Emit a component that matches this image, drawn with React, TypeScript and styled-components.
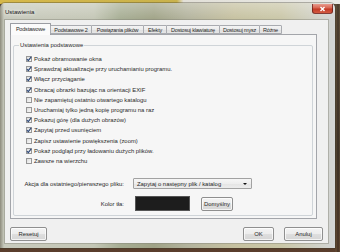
import React from 'react';
import styled, { createGlobalStyle } from 'styled-components';

const Global = createGlobalStyle`
  html, body { margin: 0; padding: 0; }
  body {
    width: 340px; height: 252px; overflow: hidden;
    font-family: "Liberation Sans", Arial, sans-serif;
    color: #2a2a2a;
  }
`;

const FS = '5.9px';

const Desktop = styled.div`
  width: 340px; height: 252px; box-sizing: border-box;
  padding: 3px 5px 4px 0;
  display: flex;
  background:
    linear-gradient(to right, #d6b84a 0, #c9b24c 52%, #e2e0d8 54%, #e9e9e5 100%) top / 100% 4px no-repeat,
    linear-gradient(to right, rgba(0,0,0,0) 335px, rgba(110, 90, 60, 0.5) 336px, rgba(40, 30, 22, 0.4) 338px, rgba(120, 100, 70, 0.4) 340px),
    linear-gradient(to bottom, #5a4a3a, #3e3329 60%, #5a3e2c);
`;

const Window = styled.div`
  flex: 1;
  display: flex; flex-direction: column;
  border-radius: 5px 5px 0 0;
  padding: 0 7px 5px 5px;
  box-shadow: 0 0 0 1px rgba(60, 56, 44, 0.35);
  background:
    linear-gradient(to right, rgba(70, 64, 46, 0.45) 0, rgba(70, 64, 46, 0) 4px),
    linear-gradient(to bottom, rgba(255, 255, 255, 0.3), rgba(255, 255, 255, 0) 17px),
    linear-gradient(to right, #c8cabd 0%, #c4c7b6 28%, #a6ad93 36%, #a0a387 46%, #b3b39d 56%, #c6c1a0 70%, #cac7a8 84%, #d4d6d6 100%);
`;

const TitleBar = styled.div`
  height: 17px;
  display: flex; align-items: center; justify-content: space-between;
`;

const Title = styled.span`
  font-size: 6px;
  color: #111;
  text-shadow: 0 0 3px rgba(255, 255, 255, 0.95), 0 0 5px rgba(255, 255, 255, 0.8);
`;

const CloseButton = styled.div`
  align-self: flex-start;
  margin-top: 1px; margin-right: -5px;
  width: 21px; height: 10px;
  border-radius: 0 0 3px 3px;
  border: 1px solid rgba(90, 25, 20, 0.7);
  border-top: none;
  box-sizing: border-box;
  background: linear-gradient(to bottom, #e79c8e 0%, #d8634f 45%, #c23a26 55%, #d45a40 100%);
  display: flex; align-items: center; justify-content: center;
`;

const Client = styled.div`
  flex: 1;
  background: #f0f0f0;
  padding: 3px 5px 2px 5px;
  display: flex; flex-direction: column;
  box-shadow: 0 0 0 1px rgba(130, 130, 120, 0.45);
`;

const TabControl = styled.div`
  width: 307px;
  display: flex; flex-direction: column;
`;

const TabStrip = styled.div`
  height: 11px;
  display: flex; align-items: flex-end;
  position: relative; z-index: 1;
`;

const Tab = styled.div<{ $w: number; $active?: boolean }>`
  width: ${p => p.$w}px;
  height: ${p => (p.$active ? 12 : 9)}px;
  margin-bottom: ${p => (p.$active ? -1 : 0)}px;
  margin-left: -1px;
  &:first-child { margin-left: 0; }
  box-sizing: border-box;
  border: 1px solid ${p => (p.$active ? '#9a9ca2' : '#a9abb0')};
  border-bottom: ${p => (p.$active ? 'none' : '1px solid #a9abb0')};
  border-radius: 1px 1px 0 0;
  background: ${p => (p.$active
    ? '#fbfbfb'
    : 'linear-gradient(to bottom, #f4f4f4 0%, #ebebeb 50%, #dedede 51%, #e6e6e6 100%)')};
  font-size: 5.5px;
  letter-spacing: -0.2px;
  display: flex; align-items: center; justify-content: center;
  white-space: nowrap;
  overflow: hidden;
  padding-bottom: ${p => (p.$active ? 1 : 0)}px;
`;

const Panel = styled.div`
  height: 185px;
  box-sizing: border-box;
  border: 1px solid #a3a5aa;
  background: #f6f6f6;
  padding: 7px 3px 2px 2px;
  display: flex; flex-direction: column;
`;

const Group = styled.fieldset`
  margin: 0; flex: 1;
  border: 1px solid #cfd4d8;
  border-radius: 2px;
  padding: 6px 0 3px 0;
  display: flex; flex-direction: column;
  min-width: 0;
`;

const Legend = styled.legend`
  font-size: ${FS};
  padding: 0 1px;
  margin-left: 5px;
`;

const CheckList = styled.div`
  display: flex; flex-direction: column;
  padding-left: 12px;
`;

const CheckRow = styled.label`
  height: 10.2px;
  display: flex; align-items: center; gap: 2px;
  font-size: ${FS};
  white-space: nowrap;
`;

const Box = styled.span`
  width: 6px; height: 6px; flex: none;
  box-sizing: border-box;
  border: 1px solid #979797;
  background: linear-gradient(135deg, #dcdcdc, #fafafa);
  display: flex; align-items: center; justify-content: center;
  overflow: visible;
`;

const Form = styled.div`
  margin-top: 12px;
  display: grid;
  grid-template-columns: 110px auto;
  column-gap: 9px;
  row-gap: 7px;
  align-items: center;
  justify-items: start;
`;

const FieldLabel = styled.span`
  justify-self: end;
  font-size: ${FS};
  white-space: nowrap;
`;

const Combo = styled.div`
  width: 119px; height: 11px; box-sizing: border-box;
  border: 1px solid #a2a2a2;
  border-radius: 1px;
  background: linear-gradient(to bottom, #f6f6f6 0%, #eeeeee 50%, #e4e4e4 51%, #ececec 100%);
  font-size: ${FS};
  display: flex; align-items: center; justify-content: space-between;
  padding: 0 4px 0 3px;
  white-space: nowrap;
`;

const Arrow = styled.span`
  width: 0; height: 0;
  border-left: 2px solid transparent;
  border-right: 2px solid transparent;
  border-top: 2px solid #111;
`;

const ColorRow = styled.div`
  display: flex; align-items: center; gap: 11px;
  margin-left: 2px;
`;

const Swatch = styled.div`
  width: 55px; height: 15px;
  background: #1d1d1d;
  border: 1px solid #555;
  box-sizing: border-box;
`;

const Button = styled.div<{ $w: number }>`
  width: ${p => p.$w}px; height: 14px; box-sizing: border-box;
  border: 1px solid #8f8f8f;
  border-radius: 2px;
  background: linear-gradient(to bottom, #f4f4f4 0%, #ececec 50%, #dedede 51%, #d6d6d6 100%);
  box-shadow: inset 0 0 0 1px rgba(255, 255, 255, 0.7);
  font-size: ${FS};
  display: flex; align-items: center; justify-content: center;
  white-space: nowrap;
`;

const Footer = styled.div`
  margin-top: 8px;
  display: flex; align-items: center;
`;

const Spacer = styled.div`
  flex: 1;
`;

const FooterRight = styled.div`
  display: flex; gap: 10px;
`;

const tabs: { label: string; w: number }[] = [
  { label: 'Podstawowe', w: 41 },
  { label: 'Podstawowe 2', w: 42 },
  { label: 'Powiązania plików', w: 53 },
  { label: 'Efekty', w: 24 },
  { label: 'Dostosuj klawiaturę', w: 54 },
  { label: 'Dostosuj mysz', w: 41 },
  { label: 'Różne', w: 23 },
];

const options: { label: string; checked: boolean }[] = [
  { label: 'Pokaż obramowanie okna', checked: true },
  { label: 'Sprawdzaj aktualizacje przy uruchamianiu programu.', checked: true },
  { label: 'Włącz przyciąganie', checked: true },
  { label: 'Obracaj obrazki bazując na orientacji EXIF', checked: true },
  { label: 'Nie zapamiętuj ostatnio otwartego katalogu', checked: false },
  { label: 'Uruchamiaj tylko jedną kopię programu na raz', checked: false },
  { label: 'Pokazuj górę (dla dużych obrazów)', checked: true },
  { label: 'Zapytaj przed usunięciem', checked: true },
  { label: 'Zapisz ustawienie powiększenia (zoom)', checked: false },
  { label: 'Pokaż podgląd przy ładowaniu dużych plików.', checked: true },
  { label: 'Zawsze na wierzchu', checked: false },
];

const Check = () => (
  <svg width="6" height="6" viewBox="0 0 6 6" style={{ overflow: 'visible' }}>
    <path d="M0.9 3.1 L2.3 4.6 L5.2 0.9" fill="none" stroke="#2c4778" strokeWidth="1.1" />
  </svg>
);

export default function App() {
  return (
    <>
      <Global />
      <Desktop>
        <Window>
          <TitleBar>
            <Title>Ustawienia</Title>
            <CloseButton>
              <svg width="7" height="6" viewBox="0 0 7 6">
                <path d="M1.5 1 L5.5 5 M5.5 1 L1.5 5" stroke="#fff" strokeWidth="1.4" />
              </svg>
            </CloseButton>
          </TitleBar>
          <Client>
            <TabControl>
              <TabStrip>
                {tabs.map((t, i) => (
                  <Tab key={t.label} $w={t.w} $active={i === 0}>{t.label}</Tab>
                ))}
              </TabStrip>
              <Panel>
                <Group>
                  <Legend>Ustawienia podstawowe</Legend>
                  <CheckList>
                    {options.map(o => (
                      <CheckRow key={o.label}>
                        <Box>{o.checked && <Check />}</Box>
                        {o.label}
                      </CheckRow>
                    ))}
                  </CheckList>
                  <Form>
                    <FieldLabel>Akcja dla ostatniego/pierwszego pliku:</FieldLabel>
                    <Combo>
                      Zapytaj o następny plik / katalog
                      <Arrow />
                    </Combo>
                    <FieldLabel>Kolor tła:</FieldLabel>
                    <ColorRow>
                      <Swatch />
                      <Button $w={32}>Domyślny</Button>
                    </ColorRow>
                  </Form>
                </Group>
              </Panel>
            </TabControl>
            <Footer>
              <Button $w={37}>Resetuj</Button>
              <Spacer />
              <FooterRight>
                <Button $w={31}>OK</Button>
                <Button $w={39}>Anuluj</Button>
              </FooterRight>
            </Footer>
          </Client>
        </Window>
      </Desktop>
    </>
  );
}
